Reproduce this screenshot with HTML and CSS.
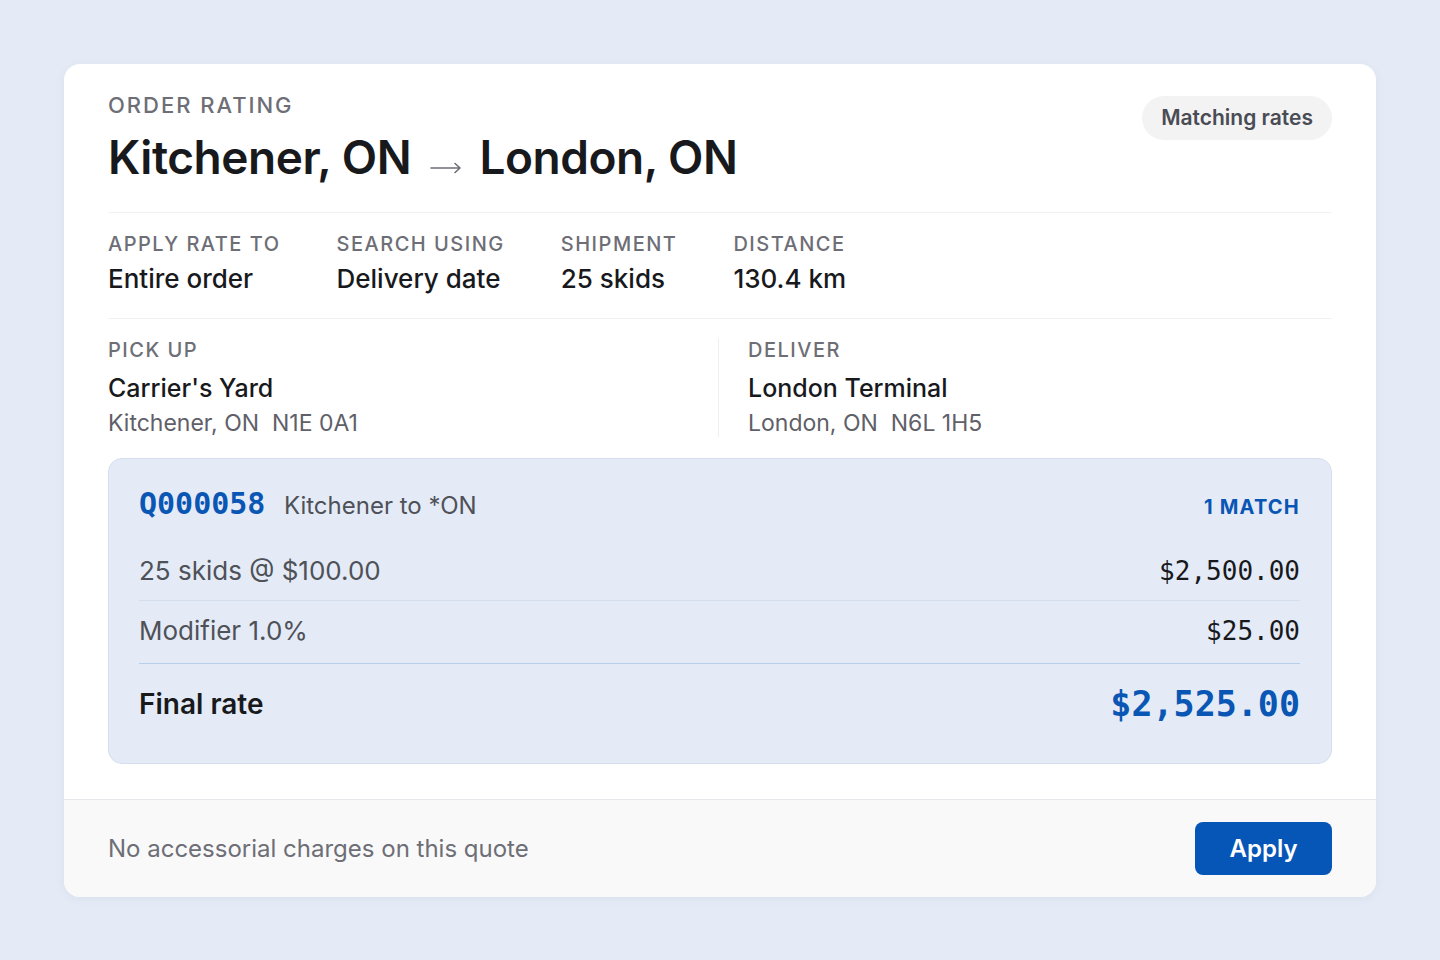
FILE: index.html
```html
<!DOCTYPE html>
<html lang="en">
<head>
    <meta charset="UTF-8">
    <meta name="viewport" content="width=device-width, initial-scale=1.0">
    <title>Order rating</title>
    <link rel="stylesheet" href="styles.css">
</head>
<body>
    <div class="rating-card">
        <div class="rating-body">
            <div class="rating-header">
                <div>
                    <div class="eyebrow">Order rating</div>
                    <h1 class="route">
                        Kitchener, ON
                        <svg class="route-arrow" width="32" height="12" viewBox="0 0 32 12" fill="none" stroke="#6d6e76" stroke-width="1.6" stroke-linecap="round" stroke-linejoin="round">
                            <path d="M1 6h29M25 1.5l5 4.5-5 4.5"/>
                        </svg>
                        London, ON
                    </h1>
                </div>
                <span class="pill">Matching rates</span>
            </div>

            <div class="stats">
                <div class="stat">
                    <div class="label">Apply rate to</div>
                    <div class="value">Entire order</div>
                </div>
                <div class="stat">
                    <div class="label">Search using</div>
                    <div class="value">Delivery date</div>
                </div>
                <div class="stat">
                    <div class="label">Shipment</div>
                    <div class="value">25 skids</div>
                </div>
                <div class="stat">
                    <div class="label">Distance</div>
                    <div class="value">130.4 km</div>
                </div>
            </div>

            <div class="stops">
                <div class="stop">
                    <div class="label">Pick up</div>
                    <div class="value">Carrier's Yard</div>
                    <div class="address">Kitchener, ON&nbsp; N1E 0A1</div>
                </div>
                <div class="stop stop-right">
                    <div class="label">Deliver</div>
                    <div class="value">London Terminal</div>
                    <div class="address">London, ON&nbsp; N6L 1H5</div>
                </div>
            </div>

            <div class="quote">
                <div class="quote-head">
                    <div class="quote-title">
                        <span class="quote-id">Q000058</span>
                        <span class="quote-name">Kitchener to *ON</span>
                    </div>
                    <span class="match-count">1 match</span>
                </div>
                <div class="quote-row">
                    <span>25 skids @ $100.00</span>
                    <span class="amount">$2,500.00</span>
                </div>
                <div class="quote-row quote-row-last">
                    <span>Modifier 1.0%</span>
                    <span class="amount">$25.00</span>
                </div>
                <div class="quote-total">
                    <span>Final rate</span>
                    <span class="total-amount">$2,525.00</span>
                </div>
            </div>
        </div>

        <div class="rating-footer">
            <span class="footer-note">No accessorial charges on this quote</span>
            <button class="apply-btn">Apply</button>
        </div>
    </div>
</body>
</html>
```

FILE: styles.css
```css
* {
    margin: 0;
    padding: 0;
    box-sizing: border-box;
}

body {
    font-family: Inter, "Noto Sans", sans-serif;
    background-color: #e5ebf6;
    color: #18191d;
    padding: 64px;
}

.rating-card {
    background-color: #fff;
    border-radius: 16px;
    box-shadow: 0 2px 10px rgba(30, 50, 90, 0.06);
    overflow: hidden;
}

.rating-body {
    padding: 28px 44px 35px;
}

/* header */
.rating-header {
    display: flex;
    justify-content: space-between;
    align-items: flex-start;
    padding-bottom: 27px;
    border-bottom: 1px solid #f0f1f3;
}

.eyebrow,
.label {
    font-size: 20px;
    line-height: 24px;
    font-weight: 500;
    letter-spacing: 0.075em;
    text-transform: uppercase;
    color: #6d6e76;
}

.eyebrow {
    font-size: 22px;
    line-height: 26px;
    letter-spacing: 0.09em;
}

.route {
    margin-top: 12px;
    font-size: 46px;
    line-height: 55px;
    font-weight: 600;
    letter-spacing: -0.01em;
}

.route-arrow {
    margin: 0 6px 0 8px;
    vertical-align: 0;
}

.pill {
    margin-top: 4px;
    padding: 9px 19px;
    border-radius: 22px;
    background-color: #f3f3f4;
    color: #4a4c54;
    font-size: 21px;
    line-height: 26px;
    font-weight: 600;
}

/* stats row */
.stats {
    display: flex;
    gap: 56px;
    padding: 19px 0 23px;
    border-bottom: 1px solid #f0f1f3;
}

.value {
    margin-top: 7px;
    font-size: 26px;
    line-height: 32px;
    font-weight: 500;
}

/* pick up / deliver */
.stops {
    display: grid;
    grid-template-columns: 610px 1fr;
    padding-top: 19px;
}

.stops .value {
    margin-top: 10px;
    font-size: 25px;
}

.stop-right {
    border-left: 1px solid #eeeff1;
    padding-left: 29px;
}

.address {
    margin-top: 5px;
    font-size: 23px;
    line-height: 28px;
    color: #5f6068;
}

/* matching quote */
.quote {
    margin-top: 21px;
    padding: 27px 31px 37px 30px;
    background-color: #e4ebf6;
    border: 1px solid #d4deef;
    border-radius: 14px;
}

.quote-head {
    display: flex;
    justify-content: space-between;
    align-items: baseline;
    margin-bottom: 33px;
}

.quote-id {
    font-family: "DejaVu Sans Mono", monospace;
    font-size: 30px;
    line-height: 36px;
    font-weight: 700;
    color: #0a56b4;
    margin-right: 14px;
}

.quote-name {
    font-size: 24px;
    color: #4f5159;
}

.match-count {
    font-size: 20px;
    font-weight: 700;
    letter-spacing: 0.06em;
    text-transform: uppercase;
    color: #0a56b4;
}

.quote-row {
    display: flex;
    justify-content: space-between;
    align-items: center;
    padding: 0 0 13px;
    border-bottom: 1px solid #d5deec;
    font-size: 26px;
    line-height: 32px;
    color: #4f5159;
}

.quote-row + .quote-row {
    padding-top: 14px;
}

.quote-row-last {
    padding-bottom: 16px;
    border-bottom-color: #b8cfea;
}

.amount {
    font-family: "DejaVu Sans Mono", monospace;
    font-size: 26px;
    color: #18191d;
}

.quote-total {
    display: flex;
    justify-content: space-between;
    align-items: center;
    padding-top: 18px;
    font-size: 28px;
    line-height: 44px;
    font-weight: 600;
}

.total-amount {
    font-family: "DejaVu Sans Mono", monospace;
    font-size: 35px;
    font-weight: 700;
    color: #0a56b4;
}

/* footer */
.rating-footer {
    display: flex;
    justify-content: space-between;
    align-items: center;
    padding: 22px 44px;
    background-color: #f9f9fa;
    border-top: 1px solid #e6e7ea;
}

.footer-note {
    font-size: 24px;
    color: #6d6e76;
}

.apply-btn {
    width: 137px;
    height: 53px;
    border: none;
    border-radius: 8px;
    background-color: #0656b8;
    color: #fff;
    font-family: inherit;
    font-size: 24px;
    font-weight: 600;
    cursor: pointer;
}

.apply-btn:hover {
    background-color: #054a9f;
}
```
